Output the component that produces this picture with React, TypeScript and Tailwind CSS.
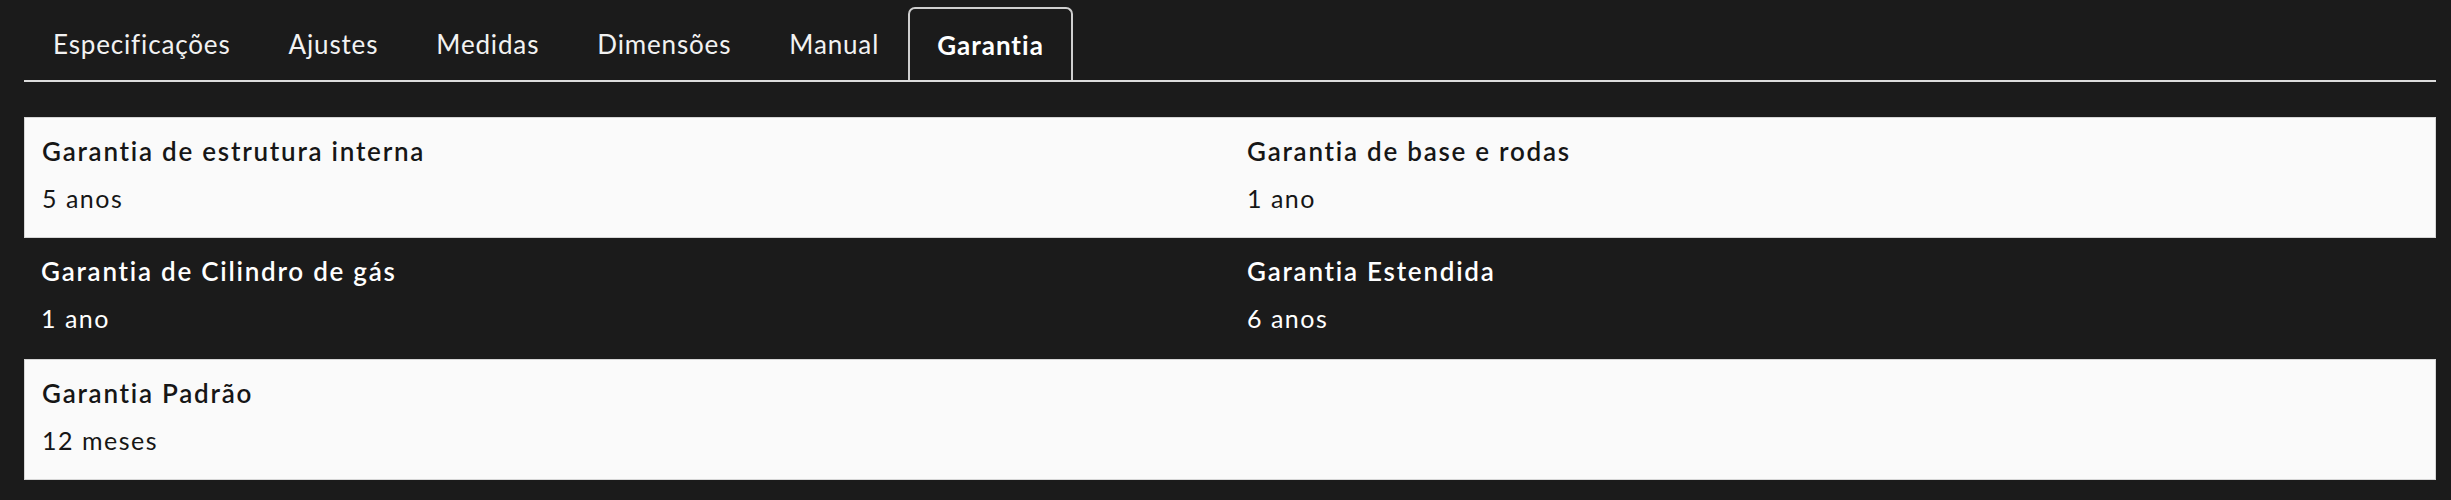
import React, { useState } from 'react';

type Spec = {
  label: string;
  value: string;
};

const tabs = ['Especificações', 'Ajustes', 'Medidas', 'Dimensões', 'Manual', 'Garantia'];

const rows: Spec[][] = [
  [
    { label: 'Garantia de estrutura interna', value: '5 anos' },
    { label: 'Garantia de base e rodas', value: '1 ano' },
  ],
  [
    { label: 'Garantia de Cilindro de gás', value: '1 ano' },
    { label: 'Garantia Estendida', value: '6 anos' },
  ],
  [{ label: 'Garantia Padrão', value: '12 meses' }],
];

export default function App() {
  const [active, setActive] = useState('Garantia');

  return (
    <div className="min-h-screen bg-[#1b1b1b] pl-[24px] pr-[15px] pt-[7px] font-['Lato',sans-serif]">
      <div className="flex border-b-2 border-[#dcdcdc]">
        {tabs.map((tab) =>
          tab === active ? (
            <button
              key={tab}
              onClick={() => setActive(tab)}
              className="h-[73px] px-[27px] border-2 border-b-0 border-[#cfcfcf] rounded-t-[7px] text-[26px] leading-[32px] tracking-[1px] font-bold text-white"
            >
              {tab}
            </button>
          ) : (
            <button
              key={tab}
              onClick={() => setActive(tab)}
              className="h-[73px] px-[29px] text-[26px] leading-[32px] tracking-[0.85px] text-[#f2f2f2]"
            >
              {tab}
            </button>
          )
        )}
      </div>

      <div className="mt-[35px]">
        {rows.map((row, i) => (
          <div
            key={i}
            className={
              i % 2 === 0
                ? 'grid grid-cols-2 h-[121px] bg-[#fafafa] border border-[#d6d6d6] text-[#161616]'
                : 'grid grid-cols-2 h-[121px] bg-[#1b1b1b] text-white'
            }
          >
            {row.map((spec) => (
              <div key={spec.label} className="px-[17px] pt-[17px]">
                <div className="text-[26px] leading-[32px] tracking-[1.75px] font-semibold">{spec.label}</div>
                <div className="mt-[15px] text-[25px] leading-[32px] tracking-[1.5px]">{spec.value}</div>
              </div>
            ))}
          </div>
        ))}
      </div>
    </div>
  );
}
